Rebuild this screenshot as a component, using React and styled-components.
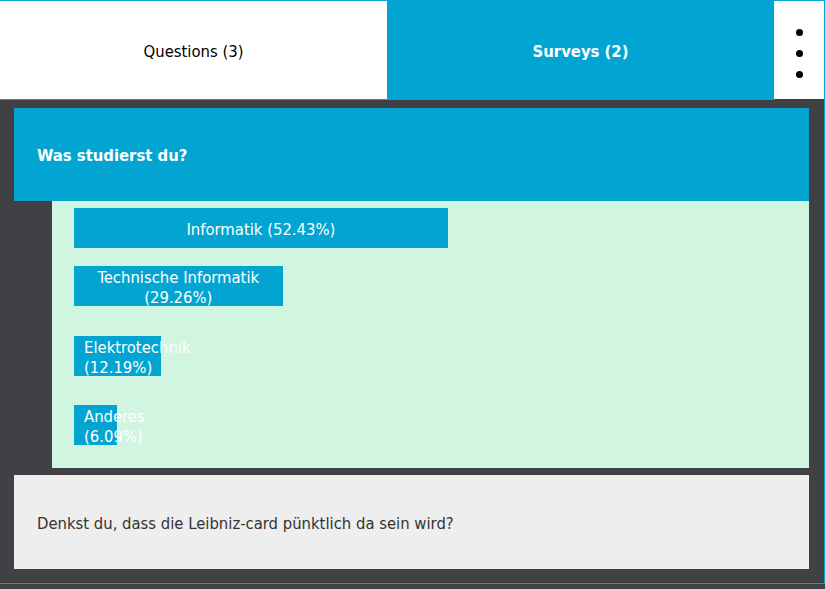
import React from "react";
import styled, { createGlobalStyle } from "styled-components";

const BLUE = "#02a5d1";
const DARK = "#404145";

const GlobalStyle = createGlobalStyle`
  html, body {
    margin: 0;
    padding: 0;
    background: ${DARK};
  }
  body {
    font-family: "DejaVu Sans Condensed", "DejaVu Sans", Verdana, sans-serif;
    font-stretch: condensed;
    font-size: 16.5px;
  }
  * { box-sizing: border-box; }
`;

const Frame = styled.div`
  width: 825px;
  border-top: 1px solid ${BLUE};
  border-right: 1px solid ${BLUE};
  border-bottom: 1px solid ${BLUE};
  background: ${DARK};
`;

const Header = styled.div`
  display: flex;
  align-items: flex-start;
`;

const Tab = styled.div`
  flex: 1;
  height: 99px;
  padding-top: 2px;
  display: flex;
  align-items: center;
  justify-content: center;
  border-bottom: 1px solid ${BLUE};
  background: ${(p) => (p.$active ? BLUE : "#ffffff")};
  color: ${(p) => (p.$active ? "#ffffff" : "#000000")};
  font-weight: ${(p) => (p.$active ? 700 : 400)};
`;

const Menu = styled.div`
  width: 50px;
  height: 98px;
  padding-top: 6px;
  background: #ffffff;
  display: flex;
  flex-direction: column;
  align-items: center;
  justify-content: center;
  gap: 14px;
`;

const Dot = styled.span`
  width: 7px;
  height: 7px;
  border-radius: 50%;
  background: #000;
`;

const Content = styled.div`
  padding: 8px 15px 14px 14px;
  display: flex;
  flex-direction: column;
  gap: 7px;
`;

const Card = styled.div`
  display: flex;
  flex-direction: column;
`;

const QuestionHead = styled.div`
  height: ${(p) => (p.$open ? 93 : 94)}px;
  padding: 2px 0 0 23px;
  display: flex;
  align-items: center;
  background: ${(p) => (p.$open ? BLUE : "#eeeeee")};
  color: ${(p) => (p.$open ? "#ffffff" : "#333333")};
  font-weight: ${(p) => (p.$open ? 700 : 400)};
`;

const Results = styled.div`
  margin-left: 38px;
  background: #d0f5e0;
  padding: 7px 22px 23px;
  display: flex;
  flex-direction: column;
`;

const Bar = styled.div`
  height: 40px;
  margin-top: ${(p) => p.$space}px;
  background: ${BLUE};
  color: #ffffff;
  padding: 3px 10px 0;
  display: flex;
  flex-direction: column;
  justify-content: center;
  text-align: center;
  line-height: 20px;
`;

const results = [
  { label: "Informatik", pct: 52.43, space: 0 },
  { label: "Technische Informatik", pct: 29.26, space: 18 },
  { label: "Elektrotechnik", pct: 12.19, space: 30 },
  { label: "Anderes", pct: 6.09, space: 29 },
];

export default function App() {
  return (
    <>
      <GlobalStyle />
      <Frame>
        <Header>
          <Tab>Questions (3)</Tab>
          <Tab $active>Surveys (2)</Tab>
          <Menu>
            <Dot />
            <Dot />
            <Dot />
          </Menu>
        </Header>
        <Content>
          <Card>
            <QuestionHead $open>Was studierst du?</QuestionHead>
            <Results>
              {results.map((r) => (
                <Bar key={r.label} $space={r.space} style={{ width: `${r.pct}%` }}>
                  <div>
                    {r.label} ({r.pct.toFixed(2)}%)
                  </div>
                </Bar>
              ))}
            </Results>
          </Card>
          <Card>
            <QuestionHead>Denkst du, dass die Leibniz-card pünktlich da sein wird?</QuestionHead>
          </Card>
        </Content>
      </Frame>
    </>
  );
}
